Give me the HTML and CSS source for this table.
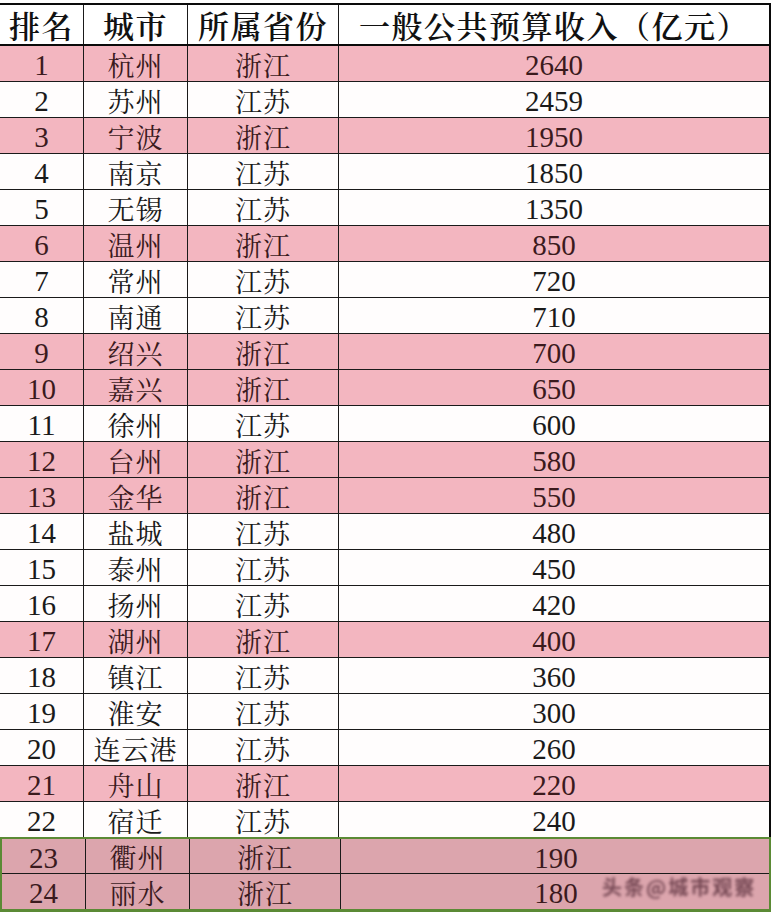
FILE: index.html
```html
<!DOCTYPE html>
<html>
<head>
<meta charset="utf-8">
<title>城市一般公共预算收入排名</title>
<link rel="stylesheet" href="styles.css">
</head>
<body>
<div class="sheet">
  <div class="row head">
    <div class="c">排名</div><div class="c">城市</div><div class="c">所属省份</div><div class="c">一般公共预算收入（亿元）</div>
  </div>
  <div class="row pink"><div class="c n">1</div><div class="c">杭州</div><div class="c">浙江</div><div class="c n">2640</div></div>
  <div class="row"><div class="c n">2</div><div class="c">苏州</div><div class="c">江苏</div><div class="c n">2459</div></div>
  <div class="row pink"><div class="c n">3</div><div class="c">宁波</div><div class="c">浙江</div><div class="c n">1950</div></div>
  <div class="row"><div class="c n">4</div><div class="c">南京</div><div class="c">江苏</div><div class="c n">1850</div></div>
  <div class="row"><div class="c n">5</div><div class="c">无锡</div><div class="c">江苏</div><div class="c n">1350</div></div>
  <div class="row pink"><div class="c n">6</div><div class="c">温州</div><div class="c">浙江</div><div class="c n">850</div></div>
  <div class="row"><div class="c n">7</div><div class="c">常州</div><div class="c">江苏</div><div class="c n">720</div></div>
  <div class="row"><div class="c n">8</div><div class="c">南通</div><div class="c">江苏</div><div class="c n">710</div></div>
  <div class="row pink"><div class="c n">9</div><div class="c">绍兴</div><div class="c">浙江</div><div class="c n">700</div></div>
  <div class="row pink"><div class="c n">10</div><div class="c">嘉兴</div><div class="c">浙江</div><div class="c n">650</div></div>
  <div class="row"><div class="c n">11</div><div class="c">徐州</div><div class="c">江苏</div><div class="c n">600</div></div>
  <div class="row pink"><div class="c n">12</div><div class="c">台州</div><div class="c">浙江</div><div class="c n">580</div></div>
  <div class="row pink"><div class="c n">13</div><div class="c">金华</div><div class="c">浙江</div><div class="c n">550</div></div>
  <div class="row"><div class="c n">14</div><div class="c">盐城</div><div class="c">江苏</div><div class="c n">480</div></div>
  <div class="row"><div class="c n">15</div><div class="c">泰州</div><div class="c">江苏</div><div class="c n">450</div></div>
  <div class="row"><div class="c n">16</div><div class="c">扬州</div><div class="c">江苏</div><div class="c n">420</div></div>
  <div class="row pink"><div class="c n">17</div><div class="c">湖州</div><div class="c">浙江</div><div class="c n">400</div></div>
  <div class="row"><div class="c n">18</div><div class="c">镇江</div><div class="c">江苏</div><div class="c n">360</div></div>
  <div class="row"><div class="c n">19</div><div class="c">淮安</div><div class="c">江苏</div><div class="c n">300</div></div>
  <div class="row"><div class="c n">20</div><div class="c">连云港</div><div class="c">江苏</div><div class="c n">260</div></div>
  <div class="row pink"><div class="c n">21</div><div class="c">舟山</div><div class="c">浙江</div><div class="c n">220</div></div>
  <div class="row"><div class="c n">22</div><div class="c">宿迁</div><div class="c">江苏</div><div class="c n">240</div></div>
  <div class="hl">
    <div class="row dark first"><div class="c n">23</div><div class="c">衢州</div><div class="c">浙江</div><div class="c n">190</div></div>
    <div class="row dark last"><div class="c n">24</div><div class="c">丽水</div><div class="c">浙江</div><div class="c n">180</div></div>
    <div class="mark">头条@城市观察</div>
  </div>
</div>
</body>
</html>
```

FILE: styles.css
```css
html, body {
  margin: 0;
  padding: 0;
  background: #ffffff;
}
body {
  width: 776px;
  height: 914px;
  overflow: hidden;
  font-family: "Noto Serif CJK SC", "Liberation Serif", serif;
  color: #1a1a1a;
}
.sheet {
  margin-top: 3px;
  width: 771px;
  border-top: 2px solid #0a0a0a;
}
.row {
  display: grid;
  grid-template-columns: 84px 104px 151px 430px;
  grid-template-rows: 100%;
  height: 35px;
  border-bottom: 1px solid #1a1a1a;
  border-right: 2px solid #0a0a0a;
  background: #fffdfd;
}
.row.head {
  height: 39px;
  border-bottom: 2px solid #0a0a0a;
  background: #ffffff;
}
.c {
  display: flex;
  align-items: center;
  justify-content: center;
  border-right: 1px solid #1a1a1a;
  font-size: 27px;
  line-height: 30px;
  letter-spacing: 1px;
  padding-top: 2px;
  white-space: nowrap;
  min-height: 0;
}
.c:last-child {
  border-right: none;
}
.head .c {
  font-size: 31px;
  line-height: 34px;
  letter-spacing: 1.5px;
  font-weight: 600;
  color: #111111;
  padding-top: 1px;
}
.c.n {
  font-family: "Liberation Serif", "Times New Roman", serif;
  font-size: 29px;
  letter-spacing: 0;
  padding-top: 3px;
}
.pink {
  background: #f3b6c0;
  color: #3b1a1d;
}
.hl {
  position: relative;
  width: 767px;
  border: 2px solid #5b8a35;
  border-bottom-width: 3px;
  margin-top: -1px;
  background: #dca5ad;
}
.row.dark {
  background: #dca5ad;
  color: #3a1a1e;
  border-right: none;
}
.row.dark.first {
  height: 34px;
}
.row.dark.last {
  height: 35px;
  border-bottom: none;
}
.mark {
  position: absolute;
  left: 600px;
  top: 38px;
  font-family: "Noto Sans CJK SC", sans-serif;
  font-size: 20px;
  line-height: 1;
  font-weight: 700;
  letter-spacing: 2px;
  color: #5a2f3c;
  filter: blur(1.4px);
  opacity: 0.8;
  white-space: nowrap;
}
```
